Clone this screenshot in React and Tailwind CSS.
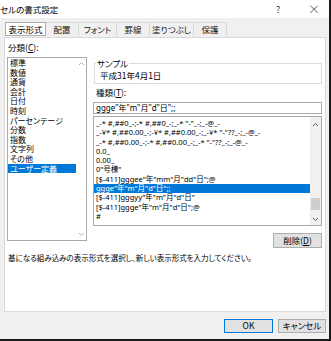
import React from 'react';

const categories = ['標準', '数値', '通貨', '会計', '日付', '時刻', 'パーセンテージ', '分数', '指数', '文字列', 'その他', 'ユーザー定義'];

const formats = [
  '_-* #,##0_-;-* #,##0_-;_-* "-"_-;_-@_-',
  '_-¥* #,##0.00_-;-¥* #,##0.00_-;_-¥* "-"??_-;_-@_-',
  '_-* #,##0.00_-;-* #,##0.00_-;_-* "-"??_-;_-@_-',
  '0.0_',
  '0.00_',
  '0"号棟"',
  '[$-411]gggee"年"mm"月"dd"日";@',
  'ggge"年"m"月"d"日";;',
  '[$-411]gggyy"年"m"月"d"日"',
  '[$-411]ggge"年"m"月"d"日";@',
  '#',
];

const tabs = [
  { label: '配置', w: 'w-[33px]' },
  { label: 'フォント', w: 'w-[38px]' },
  { label: '罫線', w: 'w-[33px]' },
  { label: '塗りつぶし', w: 'w-[44px]' },
  { label: '保護', w: 'w-[33px]' },
];

const Chevron = ({ down, color = '#606060' }) => (
  <svg width="7" height="5" viewBox="0 0 7 5">
    <polyline
      points={down ? '1,1 3.5,3.5 6,1' : '1,4 3.5,1.5 6,4'}
      fill="none"
      stroke={color}
      strokeWidth="1"
    />
  </svg>
);

export default function App() {
  return (
    <div className="w-[331px] h-[341px] flex flex-col bg-[#f0f0f0] border-r-2 border-b-2 border-[#1a1a1a] text-black font-['Noto_Sans_CJK_JP',sans-serif] [font-feature-settings:'palt'] overflow-hidden">
      {/* title bar */}
      <div className="h-[18px] bg-white flex items-center text-[8.5px] leading-none">
        <span className="flex-1">セルの書式設定</span>
        <span className="w-[10px] text-[9px] text-[#333] mr-[22px]">?</span>
        <span className="text-[12px] text-[#333] mr-[9px] font-light">×</span>
      </div>

      {/* tabs */}
      <div className="h-[19px] flex pl-[5px] pt-[4px] pb-[1px] text-[8.5px]">
        <div className="w-[41px] bg-white border border-[#adadad] flex items-center justify-center">表示形式</div>
        {tabs.map((t) => (
          <div key={t.label} className={`${t.w} border-t border-r border-[#d9d9d9] flex items-center justify-center text-[#222]`}>
            {t.label}
          </div>
        ))}
      </div>

      {/* panel */}
      <div className="ml-[4px] mr-[3px] h-[275px] bg-white border border-[#d9d9d9] text-[8.5px]">
        <div className="flex pl-[2px]">
          {/* left column */}
          <div className="w-[80px] flex flex-col">
            <div className="mt-[2px] h-[14px] leading-[14px] pl-[1px]">
              分類(<span className="underline">C</span>):
            </div>
            <div className="mt-[3px] h-[184px] border border-[#a9a9a9] flex">
              <div className="w-[68px] text-[8px]">
                {categories.map((c) => (
                  <div
                    key={c}
                    className={`h-[9.6px] leading-[9.6px] pl-[2px] whitespace-nowrap ${c === 'ユーザー定義' ? 'bg-[#0078d7] text-white' : ''}`}
                  >
                    {c}
                  </div>
                ))}
              </div>
              <div className="flex-1 flex flex-col items-center justify-between pt-[3px] pb-[3px]">
                <Chevron color="#b0b0b0" />
                <Chevron down color="#b0b0b0" />
              </div>
            </div>
          </div>

          {/* right column */}
          <div className="ml-[6px] w-[229px] flex flex-col">
            <fieldset className="mt-[19px] ml-[1px] border border-[#dcdcdc] pb-[2px]">
              <legend className="ml-[1px] px-[1px] leading-[12px]">サンプル</legend>
              <div className="pl-[5px] leading-[12px]">平成31年4月1日</div>
            </fieldset>
            <div className="mt-[2px] pl-[3px] leading-[12px]">
              種類(<span className="underline">T</span>):
            </div>
            <div className="mt-[4px] h-[12px] border border-[#a9a9a9] pl-[2px] text-[8px] leading-[10px] font-['Noto_Sans','Noto_Sans_CJK_JP',sans-serif]">
              ggge"年"m"月"d"日";;
            </div>
            <div className="mt-[2px] h-[110px] border border-[#a9a9a9] flex overflow-hidden">
              <div className="flex-1 pt-[2px] text-[7.5px] font-['Noto_Sans','Noto_Sans_CJK_JP',sans-serif]">
                {formats.map((f, i) => (
                  <div
                    key={i}
                    className={`h-[9.3px] leading-[9.3px] pl-[2px] whitespace-nowrap ${i === 7 ? 'bg-[#0078d7] text-white' : ''}`}
                  >
                    {f}
                  </div>
                ))}
              </div>
              <div className="w-[11px] bg-[#f0f0f0] flex flex-col items-center pt-[5px] pb-[3px]">
                <Chevron />
                <div className="flex-1" />
                <div className="w-[9px] h-[12px] bg-[#cdcdcd] mb-[7px]" />
                <Chevron down />
              </div>
            </div>
            <button className="mt-[7px] self-end w-[49px] h-[15px] bg-[#e1e1e1] border border-[#adadad] text-[8.5px] leading-none">
              削除(<span className="underline">D</span>)
            </button>
          </div>
        </div>
        <div className="mt-[4px] pl-[3px] leading-[12px] text-[7.5px]">
          基になる組み込みの表示形式を選択し、新しい表示形式を入力してください。
        </div>
      </div>

      {/* footer */}
      <div className="flex-1 flex items-center justify-end gap-[5px] pr-[3px] text-[8.5px]">
        <button className="w-[49px] h-[14px] bg-[#e1e1e1] border border-[#0078d7] leading-none">OK</button>
        <button className="w-[48px] h-[14px] bg-[#e1e1e1] border border-[#adadad] leading-none">キャンセル</button>
      </div>
    </div>
  );
}
